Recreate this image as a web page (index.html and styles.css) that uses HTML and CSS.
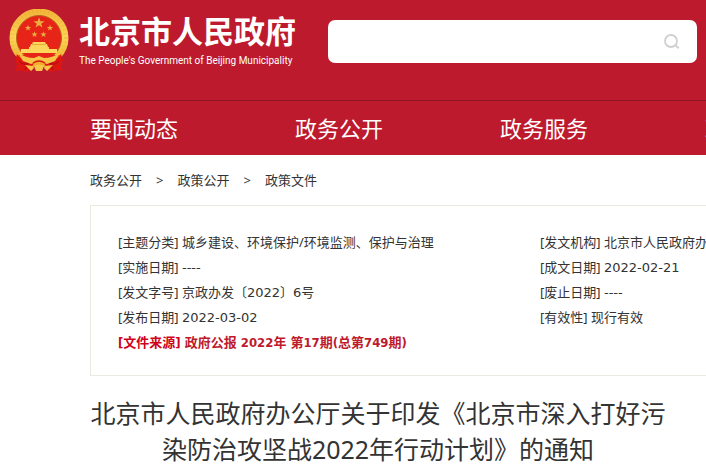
FILE: index.html
```html
<!DOCTYPE html>
<html lang="zh-CN">
<head>
    <meta charset="UTF-8">
    <meta name="viewport" content="width=device-width, initial-scale=1.0">
    <title>北京市人民政府</title>
    <link rel="stylesheet" href="styles.css">
</head>
<body>
    <header class="header">
        <div class="header-top">
            <a class="brand" href="#">
                <svg class="emblem" viewBox="0 0 60 64" aria-hidden="true">
                    <defs>
                        <linearGradient id="gold" x1="0" y1="0" x2="0" y2="1">
                            <stop offset="0" stop-color="#f3b73c"/>
                            <stop offset="0.5" stop-color="#fbd456"/>
                            <stop offset="1" stop-color="#f0ae2c"/>
                        </linearGradient>
                        <path id="star" d="M0-5 1.2-1.6 4.8-1.6 1.9.6 3 4 0 1.9-3 4-1.9.6-4.8-1.6-1.2-1.6z"/>
                    </defs>
                    <!-- wheat ring -->
                    <circle cx="30" cy="29" r="26" fill="#e62518" stroke="url(#gold)" stroke-width="7"/>
                    <circle cx="30" cy="29" r="27" fill="none" stroke="#e09a2c" stroke-width="4" stroke-dasharray="1 3" opacity="0.3"/>
                    <circle cx="30" cy="29" r="22.5" fill="none" stroke="#b9651c" stroke-width="1"/>
                    <g fill="#e9b040">
                        <use href="#star" transform="translate(30 14) scale(1.150)"/>
                        <use href="#star" transform="translate(19 19) scale(.65)"/>
                        <use href="#star" transform="translate(41 19) scale(.65)"/>
                        <use href="#star" transform="translate(25.500 25.500) scale(.65)"/>
                        <use href="#star" transform="translate(34.500 25.500) scale(.65)"/>
                    </g>
                    <!-- gate -->
                    <path d="M24 33h12l1 2H23zM22 35h16l1 3H21zM20 38h20v3H20zM12 40h36v4H12z" fill="#fbd65a"/>
                    <path d="M23 35.500h14" stroke="#d7902b" stroke-width=".6"/>
                    <path d="M9 46h42l-4 4H13z" fill="#e62518"/>
                    <!-- ribbons -->
                    <path d="M8 45q3 5 9 6l8 2-3 8-5 2-6-2-4 1 1-7-2-3zM52 45q-3 5-9 6l-8 2 3 8 5 2 6-2 4 1-1-7 2-3z" fill="#dc1712"/>
                    <path d="M10 52q4 5 9 2l-3 7M50 52q-4 5-9 2l3 7" fill="none" stroke="#a80d12" stroke-width="1"/>
                    <path d="M9 44q8 5 16 5l5-2 5 2q8 0 16-5l-5 8-8 3-8-3-8 3-8-3z" fill="#f7c548"/>
                    <path d="M24 54q6-4 12 0" fill="none" stroke="#d8140f" stroke-width="1.500"/>
                    <path d="m24 57-8-1 6 6 3-3zM36 57l8-1-6 6-3-3zM25 57q5-3 10 0l-2 5h-6z" fill="#f6c64a"/>
                </svg>
                <span class="brand-text">
                    <span class="brand-name">北京市人民政府</span>
                    <span class="brand-en">The People's Government of Beijing Municipality</span>
                </span>
            </a>
            <form class="search">
                <input class="search-input" type="text" aria-label="搜索">
                <button class="search-btn" type="submit" aria-label="搜索">
                    <svg viewBox="0 0 16 16" width="16" height="16" fill="none" stroke="#d0d0d0" stroke-width="1.800">
                        <circle cx="7" cy="7" r="6"/>
                        <path d="m11.300 11.300 3.500 3"/>
                    </svg>
                </button>
            </form>
        </div>
        <nav class="nav">
            <a href="#">要闻动态</a>
            <a href="#">政务公开</a>
            <a href="#">政务服务</a>
            <a href="#">政民互动</a>
        </nav>
    </header>

    <main class="main">
        <div class="crumbs">
            <a href="#">政务公开</a>
            <span>&gt;</span>
            <a href="#">政策公开</a>
            <span>&gt;</span>
            <a href="#">政策文件</a>
        </div>

        <div class="doc-info">
            <ul class="info-list">
                <li>[主题分类] 城乡建设、环境保护/环境监测、保护与治理</li>
                <li>[实施日期] <span class="num">----</span></li>
                <li>[发文字号] 京政办发〔<span class="num">2022</span>〕<span class="num">6</span>号</li>
                <li>[发布日期] <time class="num">2022-03-02</time></li>
                <li class="source"><span class="source-label">[文件来源]</span> 政府公报 2022年 第17期(总第749期)</li>
            </ul>
            <ul class="info-list">
                <li>[发文机构] 北京市人民政府办公厅</li>
                <li>[成文日期] <time class="num">2022-02-21</time></li>
                <li>[废止日期] <span class="num">----</span></li>
                <li>[有效性] 现行有效</li>
            </ul>
        </div>

        <h1 class="doc-title">北京市人民政府办公厅关于印发《北京市深入打好污染防治攻坚战2022年行动计划》的通知</h1>
    </main>
</body>
</html>
```
FILE: styles.css
```css
* {
    margin: 0;
    padding: 0;
    box-sizing: border-box;
}

body {
    background: #fff;
    color: #333;
    font-family: "Noto Sans", "Noto Sans CJK SC", sans-serif;
    font-size: 13px;
    overflow: hidden;
}

a {
    color: inherit;
    text-decoration: none;
}

ul {
    list-style: none;
}

.header {
    background: #bd1a2d;
    color: #fff;
}

.header-top {
    display: flex;
    align-items: flex-start;
    height: 101px;
    padding-right: 9px;
    border-bottom: 1px solid #8f1524;
}

.brand {
    display: flex;
    flex: 0 0 328px;
    gap: 10px;
    padding: 9px 0 0 9px;
}

.emblem {
    width: 60px;
    height: 64px;
}

.brand-text {
    display: flex;
    flex-direction: column;
    padding-top: 2px;
    white-space: nowrap;
}

.brand-name {
    font-family: "Noto Sans CJK SC", sans-serif;
    font-size: 31px;
    font-weight: bold;
    line-height: 38px;
}

.brand-en {
    font-family: Roboto, sans-serif;
    font-size: 10px;
    line-height: 24px;
}

.search {
    display: flex;
    flex: 1;
    height: 43px;
    margin-top: 20px;
    background: #fff;
    border-radius: 7px;
}

.search-input {
    flex: 1;
    min-width: 0;
    padding: 0 12px;
    border: none;
    outline: none;
    background: none;
    font-size: 16px;
}

.search-btn {
    display: flex;
    align-items: center;
    padding: 0 17px;
    border: none;
    background: none;
    cursor: pointer;
}

.nav {
    display: flex;
    height: 54px;
    padding-left: 90px;
    overflow: hidden;
}

.nav a {
    flex: 0 0 205px;
    font-size: 22px;
    line-height: 54px;
}

.main {
    padding-left: 90px;
}

.crumbs {
    display: flex;
    gap: 14px;
    line-height: 50px;
}

.doc-info {
    display: grid;
    grid-template-columns: 422px 1fr;
    padding: 24px 0 20px 27px;
    border: 1px solid #e9e9df;
    border-right: none;
    overflow: hidden;
}

.info-list {
    min-width: 0;
    line-height: 25px;
    white-space: nowrap;
}

.num {
    font-family: "DejaVu Sans", sans-serif;
}

.source {
    color: #bd1a2d;
    font-family: "DejaVu Sans Condensed", "Noto Sans CJK SC", sans-serif;
    font-weight: bold;
}

.source-label {
    color: #d0021b;
}

.doc-title {
    padding: 19px 40px 0 0;
    font-size: 25px;
    font-weight: normal;
    line-height: 36px;
    text-align: center;
}
```
